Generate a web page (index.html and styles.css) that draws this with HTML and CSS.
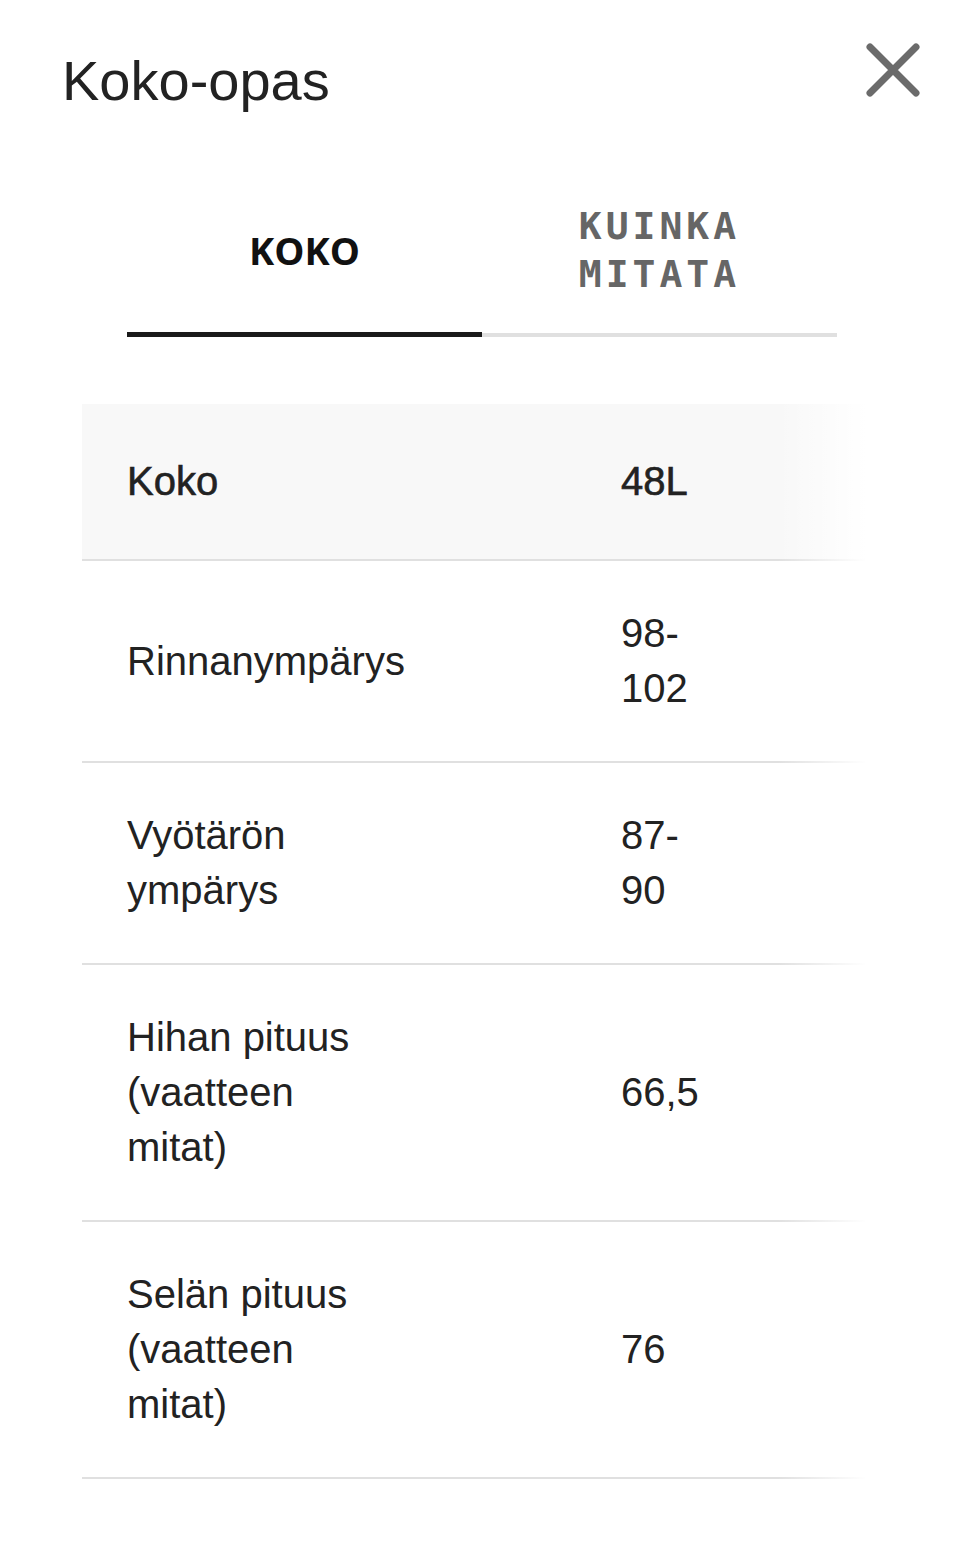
FILE: index.html
```html
<!DOCTYPE html>
<html lang="fi">
<head>
<meta charset="utf-8">
<title>Koko-opas</title>
<link rel="stylesheet" href="styles.css">
</head>
<body>
<div class="sheet">
  <header class="sheet-header">
    <h1 class="sheet-title">Koko-opas</h1>
    <button class="close-btn" aria-label="Sulje">
      <svg width="54" height="54" viewBox="0 0 54 54" aria-hidden="true">
        <path d="M4 4 L50 50 M50 4 L4 50" stroke="#6b6b6b" stroke-width="7" stroke-linecap="round" fill="none"/>
      </svg>
    </button>
  </header>

  <nav class="tabs">
    <div class="tab tab-active"><span class="tab-label-active">KOKO</span></div>
    <div class="tab tab-inactive"><span class="tab-label-inactive">KUINKA MITATA</span></div>
  </nav>

  <div class="size-table">
    <div class="row row-head">
      <div class="cell-label">Koko</div>
      <div class="cell-value">48L</div>
    </div>
    <div class="row">
      <div class="cell-label">Rinnanympärys</div>
      <div class="cell-value">98-102</div>
    </div>
    <div class="row">
      <div class="cell-label">Vyötärön ympärys</div>
      <div class="cell-value">87-90</div>
    </div>
    <div class="row">
      <div class="cell-label">Hihan pituus (vaatteen mitat)</div>
      <div class="cell-value">66,5</div>
    </div>
    <div class="row">
      <div class="cell-label">Selän pituus (vaatteen mitat)</div>
      <div class="cell-value">76</div>
    </div>
    <div class="fade"></div>
  </div>
</div>
</body>
</html>
```

FILE: styles.css
```css
* {
  box-sizing: border-box;
}

html, body {
  margin: 0;
  padding: 0;
  background: #ffffff;
}

body {
  font-family: "Liberation Sans", Arial, sans-serif;
  color: #222222;
}

.sheet {
  width: 960px;
  min-height: 1541px;
}

.sheet-header {
  display: flex;
  justify-content: space-between;
  align-items: flex-start;
  padding: 43px 40px 0 62px;
}

.sheet-title {
  margin: 5px 0 0 0;
  font-size: 56px;
  line-height: 66px;
  font-weight: 400;
  color: #222222;
}

.close-btn {
  border: 0;
  padding: 0;
  margin: 0;
  background: transparent;
  width: 54px;
  height: 54px;
  display: block;
}

.close-btn svg {
  display: block;
}

.tabs {
  display: flex;
  margin: 72px 0 0 127px;
  width: 710px;
}

.tab {
  flex: 1 1 0;
  height: 151px;
  display: flex;
  align-items: center;
  justify-content: center;
  text-align: center;
}

.tab-active {
  border-bottom: 5px solid #1a1a1a;
  padding-bottom: 18px;
}

.tab-inactive {
  border-bottom: 4px solid #e0e0e0;
  padding-bottom: 19px;
}

.tab-label-active {
  font-family: "Open Sans", "DejaVu Sans", sans-serif;
  font-weight: 700;
  font-size: 38px;
  line-height: 48px;
  color: #111111;
}

.tab-label-inactive {
  display: block;
  max-width: 200px;
  font-family: "DejaVu Sans Mono", monospace;
  font-weight: 700;
  font-size: 38px;
  line-height: 48px;
  letter-spacing: 4px;
  color: #666666;
}

.size-table {
  position: relative;
  margin: 67px 0 0 82px;
  width: 796px;
}

.row {
  display: grid;
  grid-template-columns: 449px 90px;
  column-gap: 45px;
  align-items: center;
  padding: 45px 0 45px 45px;
  border-bottom: 2px solid #e0e0e0;
  font-size: 40px;
  line-height: 55px;
  color: #222222;
}

.row-head {
  background: #f8f8f8;
  padding-top: 50px;
  padding-bottom: 50px;
  -webkit-text-stroke: 0.6px #222222;
}

.cell-label {
  max-width: 250px;
}

.fade {
  position: absolute;
  top: 0;
  right: 0;
  bottom: 0;
  width: 100px;
  background: linear-gradient(to right, rgba(255, 255, 255, 0), #ffffff 88%);
  pointer-events: none;
}
```
